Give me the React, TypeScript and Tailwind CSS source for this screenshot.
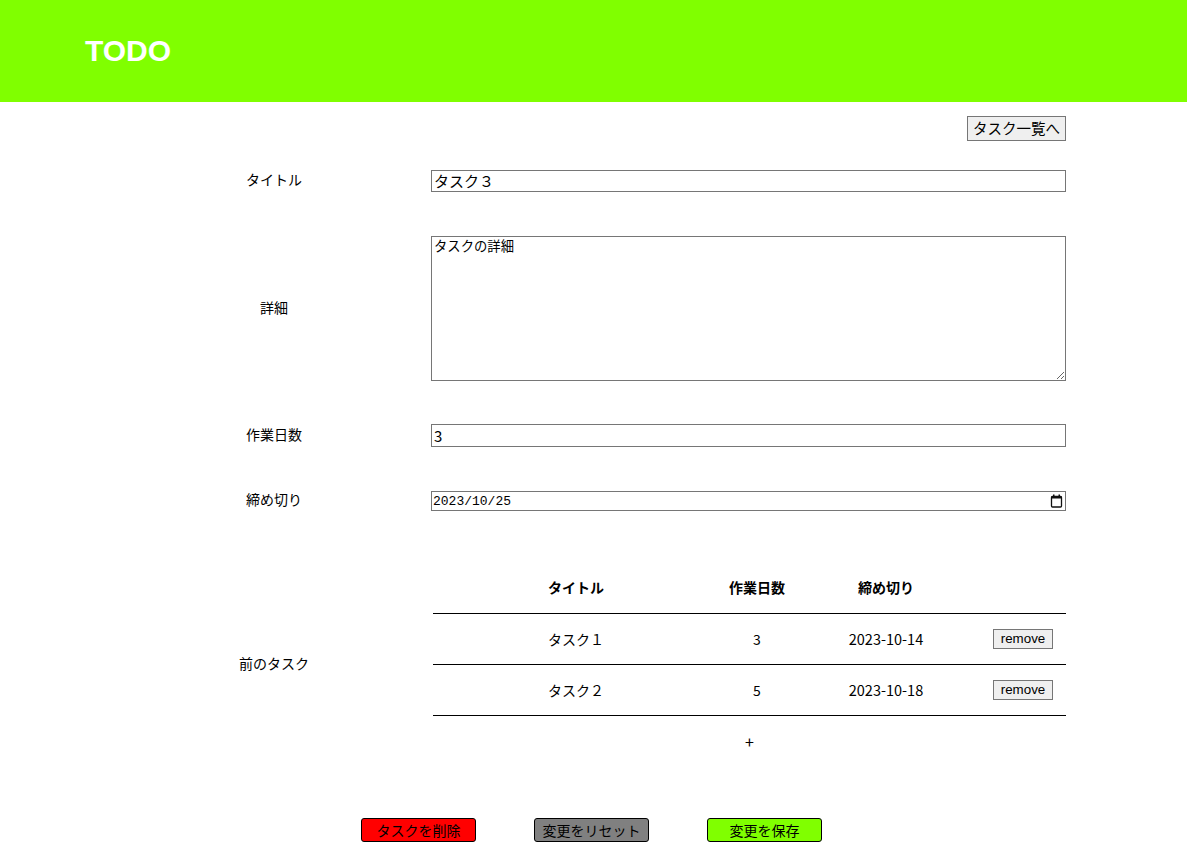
const jp = { fontFamily: '"Noto Sans CJK JP", "Liberation Sans", sans-serif' };

const tasks = [
  { title: 'タスク１', days: 3, deadline: '2023-10-14' },
  { title: 'タスク２', days: 5, deadline: '2023-10-18' },
];

const FormRow = ({ label, className = '', children }: { label: string; className?: string; children: React.ReactNode }) => (
  <div className={`flex items-center ${className}`}>
    <div className="w-[148px] -mt-[4px] text-center text-[14px] leading-[16px] text-black">{label}</div>
    <div className="ml-[83px] flex-1">{children}</div>
  </div>
);

const App = () => {
  return (
    <div className="min-h-[849px] bg-white text-black" style={jp}>
      <header className="h-[102px] bg-[#80ff00] flex items-center pl-[85px] pb-[1px]">
        <h1 className="text-white font-bold text-[30px]" style={{ fontFamily: '"Liberation Sans", "Noto Sans CJK JP", sans-serif' }}>
          TODO
        </h1>
      </header>

      <div className="ml-[200px] w-[866px]">
        <div className="flex justify-end mt-[14px]">
          <button className="block h-[25px] px-[5px] text-[14.5px] leading-none bg-[#efefef] border border-[#767676]">
            タスク一覧へ
          </button>
        </div>

        <FormRow label="タイトル" className="mt-[29px]">
          <input
            readOnly
            value="タスク３"
            className="block w-full h-[22px] px-[2px] text-[15px] border border-[#767676] outline-none"
          />
        </FormRow>

        <FormRow label="詳細" className="mt-[44px]">
          <textarea
            readOnly
            value="タスクの詳細"
            className="block w-full h-[145px] px-[2px] py-0 text-[13.33px] leading-[17px] border border-[#767676] outline-none resize"
          />
        </FormRow>

        <FormRow label="作業日数" className="mt-[43px]">
          <input
            readOnly
            value="3"
            className="block w-full h-[23px] px-[2px] text-[15px] border border-[#767676] outline-none"
          />
        </FormRow>

        <FormRow label="締め切り" className="mt-[44px]">
          <div className="relative">
            <input
              readOnly
              value="2023/10/25"
              className="block w-full h-[20px] px-[1px] text-[13px] border border-[#767676] outline-none"
              style={{ fontFamily: '"Liberation Mono", monospace' }}
            />
            <svg className="absolute right-[3px] top-[3px]" width="13" height="14" viewBox="0 0 13 14">
              <rect x="1.5" y="2.5" width="10" height="10.5" fill="none" stroke="#111" strokeWidth="1.3" rx="1" />
              <rect x="1.5" y="2" width="10" height="2.5" fill="#111" />
              <rect x="3" y="0.5" width="1.5" height="2" fill="#111" />
              <rect x="8.5" y="0.5" width="1.5" height="2" fill="#111" />
            </svg>
          </div>
        </FormRow>

        <FormRow label="前のタスク" className="mt-[52px]">
          <div className="ml-[2px] text-[14px]">
            <div className="grid grid-cols-[286px_76px_182px_1fr] h-[51px] pb-[2px] border-b border-black font-bold items-center">
              <div className="flex justify-center">タイトル</div>
              <div className="flex justify-center whitespace-nowrap">作業日数</div>
              <div className="flex justify-center">締め切り</div>
              <div />
            </div>
            {tasks.map((task, index) => (
              <div key={index} className="grid grid-cols-[286px_76px_182px_1fr] h-[51px] border-b border-black items-center">
                <div className="flex justify-center">{task.title}</div>
                <div className="flex justify-center">{task.days}</div>
                <div className="flex justify-center whitespace-nowrap text-[14.5px]">{task.deadline}</div>
                <div className="flex justify-center pl-[3px]">
                  <button
                    className="block h-[20px] px-[7px] text-[13.33px] leading-none bg-[#efefef] border border-[#767676]"
                    style={{ fontFamily: '"Liberation Sans", sans-serif' }}
                  >
                    remove
                  </button>
                </div>
              </div>
            ))}
            <div className="h-[50px] flex items-center justify-center text-[16px]">+</div>
          </div>
        </FormRow>
      </div>

      <div className="mt-[52px] flex justify-center gap-[58px] pr-[4px] text-[14px]">
        <button className="block w-[115px] h-[24px] bg-[#ff0000] border border-black rounded-[3px] leading-none">タスクを削除</button>
        <button className="block w-[115px] h-[24px] bg-[#808080] border border-black rounded-[3px] leading-none">変更をリセット</button>
        <button className="block w-[115px] h-[24px] bg-[#80ff00] border border-black rounded-[3px] leading-none">変更を保存</button>
      </div>
    </div>
  );
};

export default App;
